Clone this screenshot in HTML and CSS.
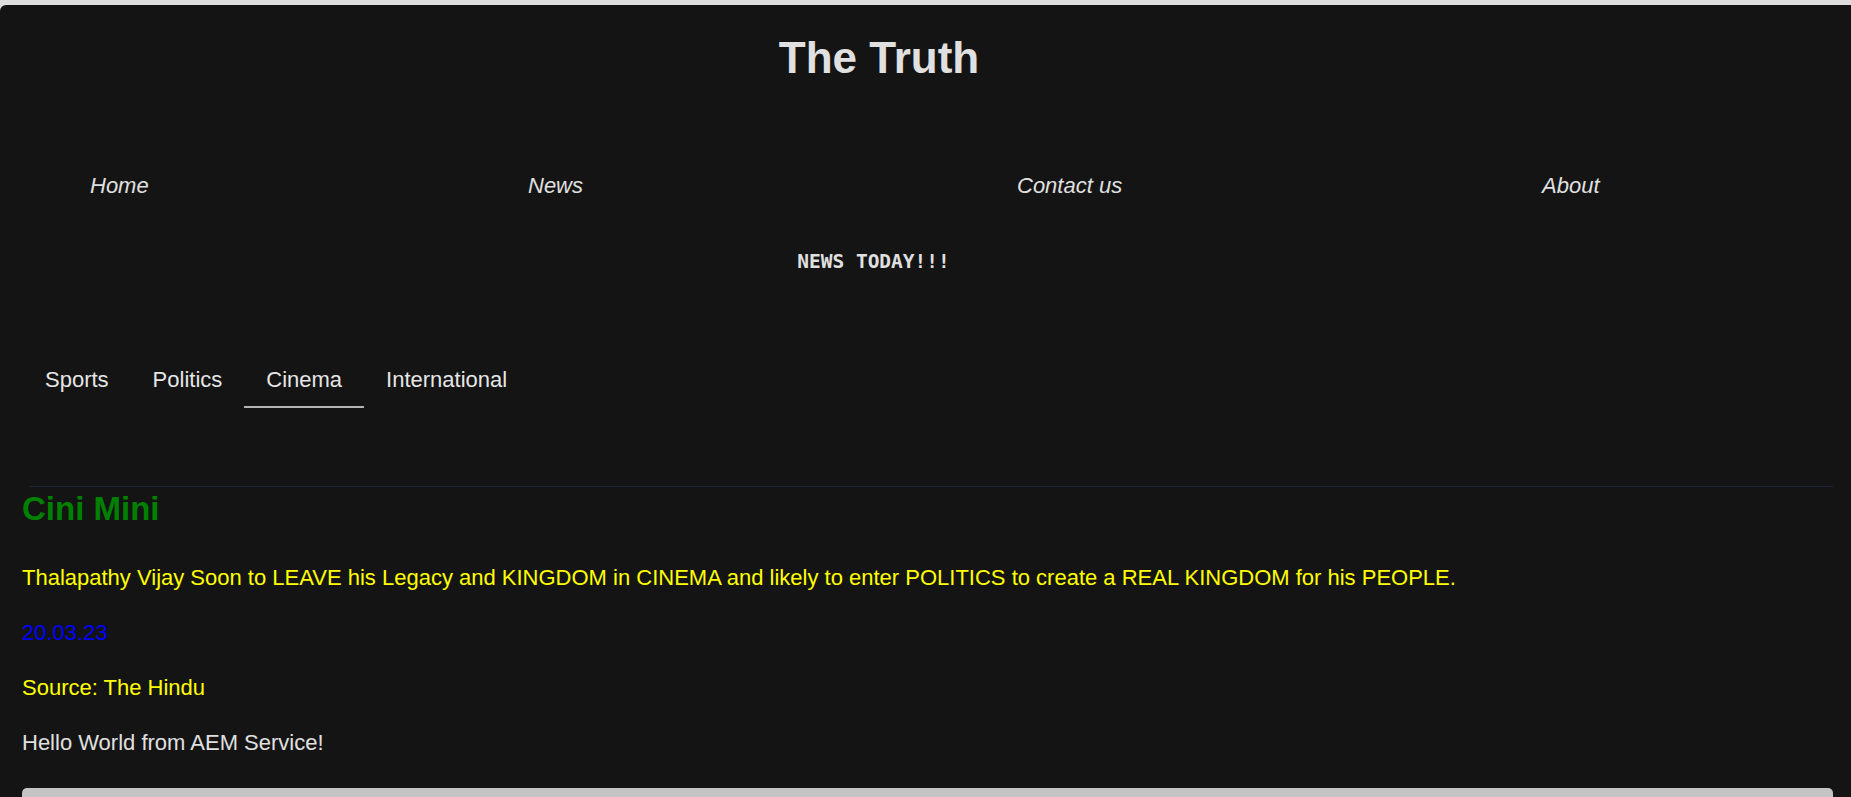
FILE: index.html
```html
<!DOCTYPE html>
<html lang="en">
<head>
<meta charset="utf-8">
<title>The Truth</title>
<link rel="stylesheet" href="styles.css">
</head>
<body>
<div class="page">
  <h1 class="title">The Truth</h1>
  <nav class="mainnav">
    <a class="navlink" href="#">Home</a>
    <a class="navlink" href="#">News</a>
    <a class="navlink" href="#">Contact us</a>
    <a class="navlink" href="#">About</a>
  </nav>
  <div class="today">NEWS TODAY!!!</div>
  <div class="tabs">
    <span class="tab">Sports</span>
    <span class="tab">Politics</span>
    <span class="tab active">Cinema</span>
    <span class="tab">International</span>
  </div>
  <hr class="rule">
  <h2 class="section">Cini Mini</h2>
  <p class="news first">Thalapathy Vijay Soon to LEAVE his Legacy and KINGDOM in CINEMA and likely to enter POLITICS to create a REAL KINGDOM for his PEOPLE.</p>
  <p class="date">20.03.23</p>
  <p class="news">Source: The Hindu</p>
  <p class="plain">Hello World from AEM Service!</p>
  <div class="footer-bar"></div>
</div>
</body>
</html>
```

FILE: styles.css
```css
html, body {
  margin: 0;
  padding: 0;
}
body {
  background: #dedede;
  font-family: "Liberation Sans", Arial, sans-serif;
  overflow: hidden;
}
.page {
  margin-top: 5px;
  background: #141414;
  border-top-left-radius: 6px;
  min-height: calc(100vh - 5px);
  padding: 27px 18px 0 22px;
  box-sizing: border-box;
  color: #dedede;
}
.title {
  margin: 0;
  padding-right: 97px;
  text-align: center;
  font-size: 44px;
  line-height: 51px;
  font-weight: bold;
  color: #e0e0e0;
}
.mainnav {
  margin-top: 90px;
  display: grid;
  grid-template-columns: 438px 489px 525px auto;
  padding-left: 68px;
}
.navlink {
  font-style: italic;
  font-size: 22px;
  line-height: 25px;
  color: #e0e0e0;
  text-decoration: none;
}
.today {
  margin-top: 52px;
  padding-right: 108px;
  text-align: center;
  font-family: "DejaVu Sans Mono", "Liberation Mono", monospace;
  font-weight: bold;
  font-size: 19.5px;
  line-height: 24px;
  color: #e0e0e0;
}
.tabs {
  margin-top: 79px;
  display: flex;
  padding-left: 1px;
}
.tab {
  padding: 14px 22px 14px;
  font-size: 22px;
  line-height: 25px;
  color: #e6e6e6;
  border-bottom: 2px solid transparent;
}
.tab.active {
  border-bottom-color: #b4b4b4;
}
.rule {
  margin: 78px 0 0 7px;
  border: 0;
  height: 1px;
  background: #1c2836;
}
.section {
  margin: 3px 0 0;
  font-size: 33px;
  line-height: 38px;
  font-weight: bold;
  color: #008000;
}
.news, .date, .plain {
  margin: 0 0 23px;
  font-size: 22px;
  line-height: 32px;
}
.news.first {
  margin-top: 34px;
}
.news {
  color: #ffff00;
}
.date {
  color: #0000ff;
}
.plain {
  color: #e0e0e0;
  margin-bottom: 29px;
}
.footer-bar {
  height: 40px;
  background: #c4c4c4;
  border-radius: 5px 5px 0 0;
}
```
